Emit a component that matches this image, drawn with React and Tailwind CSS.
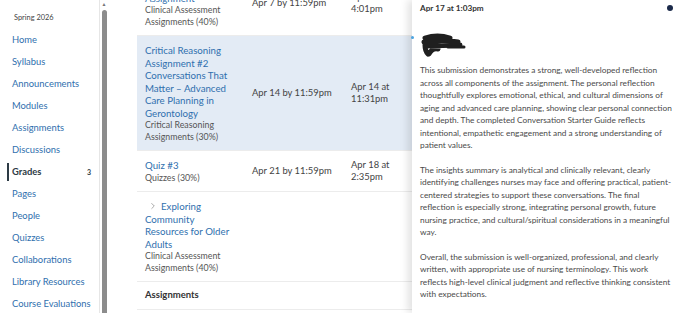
import { ChevronRight } from 'lucide-react'

const NAV = [
  'Home', 'Syllabus', 'Announcements', 'Modules', 'Assignments', 'Discussions',
  'Grades', 'Pages', 'People', 'Quizzes', 'Collaborations', 'Library Resources',
  'Course Evaluations',
]

const ROWS = [
  {
    title: 'Clinical Reflection Assignment',
    group: ['Clinical Assessment', 'Assignments (40%)'],
    due: 'Apr 7 by 11:59pm',
    submitted: ['Apr 7 at', '4:01pm'],
  },
  {
    title: 'Critical Reasoning Assignment #2 Conversations That Matter – Advanced Care Planning in Gerontology',
    group: ['Critical Reasoning', 'Assignments (30%)'],
    due: 'Apr 14 by 11:59pm',
    submitted: ['Apr 14 at', '11:31pm'],
    active: true,
  },
  {
    title: 'Quiz #3',
    group: ['Quizzes (30%)'],
    due: 'Apr 21 by 11:59pm',
    submitted: ['Apr 18 at', '2:35pm'],
  },
  {
    title: 'Exploring Community Resources for Older Adults',
    group: ['Clinical Assessment', 'Assignments (40%)'],
    expandable: true,
  },
]

const COMMENT = [
  'This submission demonstrates a strong, well-developed reflection across all components of the assignment. The personal reflection thoughtfully explores emotional, ethical, and cultural dimensions of aging and advanced care planning, showing clear personal connection and depth. The completed Conversation Starter Guide reflects intentional, empathetic engagement and a strong understanding of patient values.',
  'The insights summary is analytical and clinically relevant, clearly identifying challenges nurses may face and offering practical, patient-centered strategies to support these conversations. The final reflection is especially strong, integrating personal growth, future nursing practice, and cultural/spiritual considerations in a meaningful way.',
  'Overall, the submission is well-organized, professional, and clearly written, with appropriate use of nursing terminology. This work reflects high-level clinical judgment and reflective thinking consistent with expectations.',
]

export default function App() {
  return (
    <div className="flex h-[313px] w-[680px] overflow-hidden bg-white font-['Lato','Liberation_Sans',sans-serif]">

      {/* Course nav */}
      <div className="w-[100px] shrink-0 border-r border-[#e6e6e6]">
        <div className="pl-[14px] pt-[13px] text-[7.4px] leading-[10px] text-[#444]">Spring 2026</div>
        <ul className="mt-[6px]">
          {NAV.map(item => (
            <li key={item}
              className={`relative flex h-[22px] items-center whitespace-nowrap pl-[12px] pr-[8px] text-[9.4px]
                ${item === 'Grades' ? 'font-bold text-[#2d3b45]' : 'text-[#2f6fae]'}`}>
              {item === 'Grades' && <span className="absolute left-[7px] top-[2px] h-[18px] w-[1.5px] bg-[#2d3b45]" />}
              <span className="flex-1">{item}</span>
              {item === 'Grades' && <span className="text-[7px] font-bold text-[#2d3b45]">3</span>}
            </li>
          ))}
        </ul>
      </div>

      {/* Scrollbar */}
      <div className="flex w-[8px] shrink-0 flex-col items-center">
        <span className="mt-[1px] text-[5px] leading-[6px] text-[#777]">▲</span>
        <div className="mt-[3px] w-[5px] flex-1 rounded-t-full bg-[#8c8c8c]" />
      </div>

      {/* Grades table */}
      <div className="w-[304px] shrink-0 pl-[29px]">
        <div className="-mt-[29px]">
          {ROWS.map(row => (
            <div key={row.title}
              className={`grid grid-cols-[115px_99px_1fr] items-center border-b border-[#ececec]
                ${row.active ? 'bg-[#e3ebf5]' : ''}`}>
              <div className="py-[8px] pl-[8px] pr-[14px]">
                <div className="text-[9.7px] leading-[12.5px] text-[#2f6fae]">
                  {row.expandable && <ChevronRight size={10} strokeWidth={1.2} className="mr-[3px] ml-[3px] inline-block align-[-1px] text-[#555]" />}
                  {row.title}
                </div>
                {row.group.map(g => (
                  <div key={g} className="text-[8.8px] leading-[11.5px] text-[#555]">{g}</div>
                ))}
              </div>
              <div className="text-[9.4px] leading-[12.5px] text-[#444]">{row.due}</div>
              <div className="text-[9.4px] leading-[12.5px] text-[#444]">
                {row.submitted?.map(s => <div key={s}>{s}</div>)}
              </div>
            </div>
          ))}
          <div className="flex h-[28px] items-center border-b border-[#ececec] pl-[8px] text-[9.5px] font-bold text-[#333]">
            Assignments
          </div>
        </div>
      </div>

      {/* Comment drawer */}
      <div className="relative w-[268px] shrink-0 bg-white pl-[8px] pr-[4px] shadow-[-4px_0_8px_rgba(0,0,0,0.12)]">
        <span className="absolute -left-[1px] top-[36px] h-[3px] w-[3px] rounded-full bg-[#4aa3e0]" />
        <div className="flex items-center justify-between pt-[2px]">
          <span className="text-[8.2px] font-bold leading-[12px] text-[#333]">Apr 17 at 1:03pm</span>
          <span className="mr-[3px] h-[6px] w-[6px] rounded-full bg-[#1b2a4a]" />
        </div>
        <svg width="48" height="26" viewBox="0 0 48 26" className="mt-[18px]">
          <path d="M5 6 C14 3 24 4 30 6 M4 10 C16 8 28 8 38 10 M6 14 L40 13 M5 13 C5 17 6 20 8 22 M9 22 C11 18 14 16 18 17"
            stroke="#1f1f1f" strokeWidth="5" strokeLinecap="round" fill="none" />
          <path d="M28 15 L44 15" stroke="#1f1f1f" strokeWidth="3" strokeLinecap="round" fill="none" />
        </svg>
        <div className="mt-[6px] space-y-[12px] text-[8.3px] leading-[12.5px] text-[#4a4a4a]">
          {COMMENT.map(p => <p key={p.slice(0, 12)}>{p}</p>)}
        </div>
      </div>
    </div>
  )
}
